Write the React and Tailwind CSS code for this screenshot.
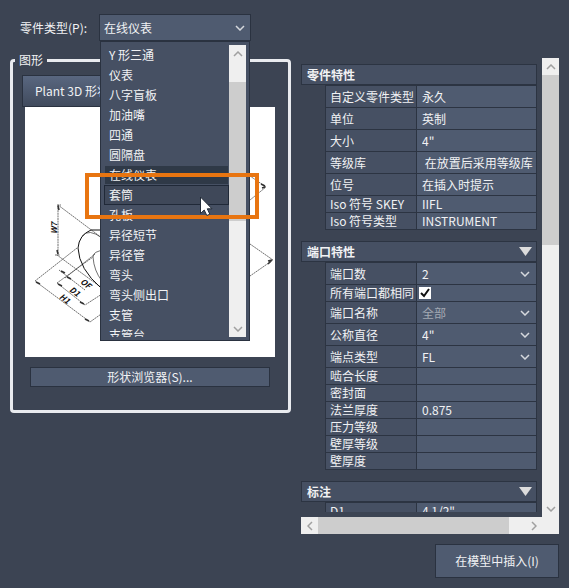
import { useState } from "react";

const partTypes = [
  "Y 形三通",
  "仪表",
  "八字盲板",
  "加油嘴",
  "四通",
  "圆隔盘",
  "在线仪表",
  "套筒",
  "孔板",
  "异径短节",
  "异径管",
  "弯头",
  "弯头侧出口",
  "支管",
  "支管台",
];

const partProps = [
  { id: "custom-type", label: "自定义零件类型", value: "永久", tall: true },
  { id: "unit", label: "单位", value: "英制", tall: true },
  { id: "size", label: "大小", value: '4"', tall: true },
  { id: "spec", label: "等级库", value: " 在放置后采用等级库", tall: true },
  { id: "tag", label: "位号", value: "在插入时提示", tall: true },
  { id: "skey", label: "Iso 符号 SKEY", value: "IIFL" },
  { id: "iso-type", label: "Iso 符号类型", value: "INSTRUMENT" },
];

const portProps = [
  { id: "port-count", label: "端口数", value: "2", type: "select", tall: true },
  { id: "same-ports", label: "所有端口都相同", type: "check" },
  { id: "port-name", label: "端口名称", value: "全部", type: "select", tall: true, disabled: true },
  { id: "diameter", label: "公称直径", value: '4"', type: "select", tall: true },
  { id: "end-type", label: "端点类型", value: "FL", type: "select", tall: true },
  { id: "engagement", label: "啮合长度", value: "" },
  { id: "facing", label: "密封面", value: "" },
  { id: "flange", label: "法兰厚度", value: "0.875" },
  { id: "pressure", label: "压力等级", value: "" },
  { id: "schedule", label: "壁厚等级", value: "" },
  { id: "wall", label: "壁厚度", value: "" },
];

const dimProps = [{ id: "d1", label: "D1", value: '4 1/2"' }];

function Chevron({ className }) {
  return (
    <svg viewBox="0 0 10 6" fill="none" stroke="currentColor" strokeWidth="1.5" className={className} aria-hidden="true">
      <path d="M1 1l4 4 4-4" />
    </svg>
  );
}

function PropertyValue({ row }) {
  if (row.type === "check") {
    return (
      <span className="relative flex h-4 items-center pl-[2px]">
        <input id={row.id} type="checkbox" defaultChecked className="peer size-3 appearance-none bg-white" />
        <svg viewBox="0 0 12 12" className="pointer-events-none absolute left-[2px] hidden size-3 peer-checked:block" fill="none" stroke="#111" strokeWidth="2">
          <path d="M2 6l3 3 5-7" />
        </svg>
      </span>
    );
  }

  if (row.type === "select") {
    return (
      <span className="relative flex items-center">
        <select
          id={row.id}
          disabled={row.disabled}
          className="h-[21px] w-full appearance-none bg-transparent pl-[5px] text-[#f1f2f4] disabled:text-[#a3a9b3] disabled:opacity-100"
        >
          <option>{row.value}</option>
        </select>
        <Chevron className="pointer-events-none absolute right-[6px] h-[6px] w-[10px] text-[#d5d8dd]" />
      </span>
    );
  }

  return (
    <input
      id={row.id}
      type="text"
      defaultValue={row.value}
      className={row.tall ? "block h-[21px] w-full pl-[5px]" : "block h-4 w-full pl-[5px]"}
    />
  );
}

function PropertySection({ title, rows, collapsible }) {
  return (
    <section>
      <h2 className="flex h-[21px] items-center justify-between border border-[#2c3442] bg-[#465063] pr-1 pl-[5px] font-bold">
        {title}
        {collapsible && (
          <svg viewBox="0 0 13 9" className="h-[9px] w-[13px]" aria-hidden="true">
            <path d="M0 0h13L6.500 9z" fill="#dcdcdc" />
          </svg>
        )}
      </h2>
      <div className="pl-6">
        <table className="w-full table-fixed border-collapse">
          <tbody>
            {rows.map((row) => (
              <tr key={row.id}>
                <th className="w-[91px] border border-[#2c3442] bg-[#465063] p-0 text-left font-normal">
                  <label htmlFor={row.id} className="block h-4 pl-1 leading-4 whitespace-nowrap">
                    {row.label}
                  </label>
                </th>
                <td className="border border-[#2c3442] bg-[#4f5b70] p-0">
                  <PropertyValue row={row} />
                </td>
              </tr>
            ))}
          </tbody>
        </table>
      </div>
    </section>
  );
}

function ShapePreview() {
  return (
    <div className="mr-[13px] ml-3 h-[250px] bg-white">
      <svg viewBox="0 0 250 250" className="size-full" fill="none" stroke="#333" strokeWidth="0.7">
        {/* extension and dimension lines */}
        <path d="M32 98h4M33 98v50M30 148h5M33 98l44 33M32 148l45 33M52 141L10 174l55 41 14-10M32 176l28 22 17-11M32 176l36-26M34 163l26 20M40 171l30-24" strokeDasharray="2 0.600" />
        <path d="M225 69l16 11-16 13M225 137l23 16-23 16" strokeDasharray="2 0.600" />
        {/* arrow heads */}
        <path
          d="M33 99l1 4M33 147l-1-4M11 175l4 2M64 214l-4-2M33 177l4 2M59 197l-4-2M36 164l4 2M46 172l-4-2M240 79l-4-2M240 80l-3 1M247 153l-4 1M246 154l-3 3"
          strokeWidth="1.600"
        />
        {/* body */}
        <path d="M85 123H66Q54 128 53 141Q54 162 76 181" stroke="#111" strokeWidth="1" />
        <path d="M57 129Q64 121 77 131M80 143Q68 144 68 150Q69 164 77 174" />
        <g fill="#111" stroke="none" fontSize="8" fontWeight="700" fontStyle="italic" textAnchor="middle">
          <text transform="translate(32 121) rotate(-90)">W7</text>
          <text transform="translate(59 179) rotate(37)">OF</text>
          <text transform="translate(48 187) rotate(37)">D1</text>
          <text transform="translate(38 194) rotate(37)">H1</text>
        </g>
      </svg>
    </div>
  );
}

function PartTypeList({ value, active, onPick }) {
  return (
    <div className="absolute top-full left-px z-10 flex h-[300px] w-[150px] border border-[#2a3240] bg-[#465063] p-[3px]">
      <ul role="listbox" aria-label="零件类型" className="flex-1 overflow-hidden">
        {partTypes.map((name) => (
          <li
            key={name}
            role="option"
            aria-selected={name === value}
            onClick={() => onPick(name)}
            className={
              name === active
                ? "h-5 border border-[#202938] bg-[#3f4859] px-1 leading-[18px]"
                : name === value
                  ? "h-5 border border-transparent bg-[#2f3947] bg-clip-padding px-1 leading-[18px]"
                  : "h-5 border border-transparent px-1 leading-[18px]"
            }
          >
            {name}
          </li>
        ))}
      </ul>
      <div className="flex w-[17px] flex-col items-center bg-[#efefef] text-[#a0a0a0]">
        <div className="flex h-[37px] items-start pt-[6px]">
          <Chevron className="h-[6px] w-[10px] rotate-180" />
        </div>
        <div className="h-[139px] w-full bg-[#cdcdcd]" />
        <div className="flex flex-1 items-end pb-[5px]">
          <Chevron className="h-[6px] w-[10px]" />
        </div>
      </div>
      {/* callout round the hovered entry */}
      <div className="pointer-events-none absolute top-[131px] -left-4 h-[46px] w-[174px] border-4 border-[#e87511]" />
      <svg viewBox="0 0 14 20" className="pointer-events-none absolute top-[154px] left-[98px] h-5 w-[14px]" aria-hidden="true">
        <path d="M1.500 1v16.500l3.700-3.500 2.600 5.500 3-1.300-2.500-5.400h4.700z" fill="#fff" stroke="#222b38" strokeWidth="1" />
      </svg>
    </div>
  );
}

export default function App() {
  const [partType, setPartType] = useState("在线仪表");

  return (
    <main className="min-h-screen bg-[#3c4453] px-[10px] py-[14px] font-['Noto_Sans_CJK_SC','Noto_Sans',sans-serif] text-xs text-[#f1f2f4]">
      <div className="flex gap-[10px]">
        <div className="flex min-w-0 flex-1 flex-col gap-[10px]">
          <div className="flex items-center pl-[10px]">
            <label htmlFor="part-type" className="w-[79px]">
              零件类型(P):
            </label>
            <div className="relative w-[152px]">
              <select
                id="part-type"
                value={partType}
                onChange={(e) => setPartType(e.target.value)}
                className="block h-[27px] w-full appearance-none border border-[#2a3240] bg-[#4f5b70] pl-1"
              >
                {partTypes.map((name) => (
                  <option key={name}>{name}</option>
                ))}
              </select>
              <Chevron className="pointer-events-none absolute top-[11px] right-[6px] h-[6px] w-[10px] text-[#d5d8dd]" />
              <PartTypeList value={partType} active="套筒" onPick={setPartType} />
            </div>
          </div>

          <fieldset className="rounded-[4px] border-[3px] border-[#e9ebef] pb-[23px]">
            <legend className="ml-[2px] px-1 leading-[18px]">图形</legend>
            <div className="pt-[6px] pl-[9px]">
              <button type="button" className="h-8 w-32 overflow-hidden border border-[#2a3240] bg-linear-to-b from-[#596780] to-[#414b5d] pl-3 text-left whitespace-nowrap">
                Plant 3D 形状
              </button>
            </div>
            <ShapePreview />
            <div className="mr-[18px] ml-[17px] mt-[10px]">
              <button type="button" className="block h-5 w-full border border-[#2a3240] bg-[#4f5b70] leading-[18px]">
                形状浏览器(S)...
              </button>
            </div>
          </fieldset>
        </div>

        <aside className="w-[258px] shrink-0 pt-11">
          <div className="flex">
            <div className="flex-1 pt-[6px] pr-[5px] pb-[5px]">
              <div className="flex h-[448px] flex-col gap-[11px] overflow-hidden">
                <PropertySection title="零件特性" rows={partProps} />
                <PropertySection title="端口特性" rows={portProps} collapsible />
                <PropertySection title="标注" rows={dimProps} collapsible />
              </div>
            </div>
            <div className="flex w-[17px] flex-col items-center bg-[#efefef] text-[#a0a0a0]">
              <div className="flex h-[17px] items-center">
                <Chevron className="h-[6px] w-[10px] rotate-180" />
              </div>
              <div className="h-[170px] w-full bg-[#cdcdcd]" />
              <div className="flex flex-1 items-end pb-[5px]">
                <Chevron className="h-[6px] w-[10px]" />
              </div>
            </div>
          </div>
          <div className="flex h-[17px] items-center bg-[#efefef] text-[#a0a0a0]">
            <div className="flex w-[17px] justify-center">
              <Chevron className="h-[6px] w-[10px] rotate-90" />
            </div>
            <div className="h-full w-[191px] bg-[#cdcdcd]" />
            <div className="flex flex-1 justify-center">
              <Chevron className="h-[6px] w-[10px] -rotate-90" />
            </div>
          </div>
        </aside>
      </div>

      <div className="mt-[10px] flex justify-end">
        <button type="button" className="h-[34px] w-[124px] border border-[#2a3240] bg-[#4f5b70]">
          在模型中插入(I)
        </button>
      </div>
    </main>
  );
}
